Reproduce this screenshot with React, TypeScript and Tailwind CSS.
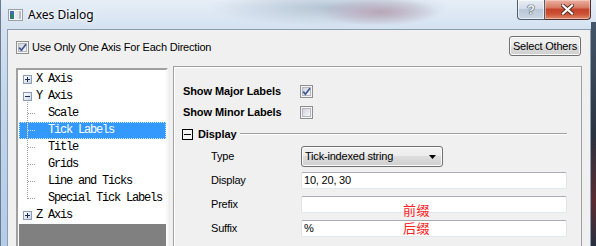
import React from "react";

const sans = { fontFamily: '"Liberation Sans", Arial, sans-serif' };
const mono = { fontFamily: '"Liberation Mono", "Courier New", monospace' };

function Win7Check({ checked }: { checked?: boolean }) {
  return (
    <span className="relative inline-flex w-[13px] h-[13px] shrink-0 items-center justify-center border border-[#8e8f8f] bg-[#f4f4f4]">
      <span className="w-[9px] h-[9px] border border-[#b3b7bd] bg-[linear-gradient(135deg,#cfd3d9,#f7f7f7)]" />
      {checked && (
        <svg className="absolute left-0 top-0" width="11" height="11" viewBox="0 0 11 11">
          <path d="M2.2 5.6 L4.4 8.2 L9 2.2" stroke="#3d5596" strokeWidth="1.7" fill="none" />
        </svg>
      )}
    </span>
  );
}

function Expander({ minus }: { minus?: boolean }) {
  return (
    <span className="relative block w-[9px] h-[9px] shrink-0 border border-[#8a9db5] bg-[linear-gradient(135deg,#ffffff,#c9d3df)]">
      <span className="absolute left-[1px] top-[3px] w-[5px] h-[1px] bg-[#1b2f5e]" />
      {!minus && <span className="absolute left-[3px] top-[1px] w-[1px] h-[5px] bg-[#1b2f5e]" />}
    </span>
  );
}

type Row = { label: string; level: 0 | 1; box?: "plus" | "minus"; sel?: boolean };
const rows: Row[] = [
  { label: "X Axis", level: 0, box: "plus" },
  { label: "Y Axis", level: 0, box: "minus" },
  { label: "Scale", level: 1 },
  { label: "Tick Labels", level: 1, sel: true },
  { label: "Title", level: 1 },
  { label: "Grids", level: 1 },
  { label: "Line and Ticks", level: 1 },
  { label: "Special Tick Labels", level: 1 },
  { label: "Z Axis", level: 0, box: "plus" },
];

function Tree() {
  return (
    <div className="w-[152px] h-[200px] mt-[2px] shrink-0 border-2 border-t-[#a0a0a0] border-l-[#a0a0a0] border-r-[#f8f8f8] border-b-[#f8f8f8] shadow-[inset_1px_1px_0_#696969]">
      <div className="relative h-full bg-white pl-[1px] pt-[1px] flex flex-col">
        {rows.map((r) => (
          <div
            key={r.label}
            className={
              "h-[17px] flex items-center shrink-0 text-[12px] tracking-[-1.2px] leading-[17px] " +
              (r.sel
                ? "bg-[#3399ff] text-white outline outline-1 outline-dotted outline-offset-[-1px] outline-[#cfe6ff]"
                : "text-black")
            }
            style={mono}
          >
            {r.level === 0 ? (
              <>
                <span className="ml-[4px]">
                  <Expander minus={r.box === "minus"} />
                </span>
                <span className="ml-[4px] whitespace-pre">{r.label}</span>
              </>
            ) : (
              <span className="ml-[29px] whitespace-pre">{r.label}</span>
            )}
          </div>
        ))}
        <div className="flex-1 bg-[#808080]" />
        <svg className="absolute left-0 top-[1px]" width="40" height="153" viewBox="0 0 40 153" shapeRendering="crispEdges">
          <line x1="9.5" y1="31" x2="9.5" y2="128" stroke="#a0a0a0" strokeDasharray="1 1" />
          {[42, 76, 93, 110, 127].map((y) => (
            <line key={y} x1="10" y1={y + 0.5} x2="17" y2={y + 0.5} stroke="#a0a0a0" strokeDasharray="1 1" />
          ))}
          <line x1="9.5" y1="52" x2="9.5" y2="68" stroke="#d6eaff" strokeDasharray="1 1" />
          <line x1="10" y1="59.5" x2="17" y2="59.5" stroke="#d6eaff" strokeDasharray="1 1" />
        </svg>
      </div>
    </div>
  );
}

function TextInput({ value, children }: { value?: string; children?: React.ReactNode }) {
  return (
    <div className="relative w-[266px] h-[17px] border border-[#e2e3ea] border-t-[#abadb3] border-b-[#e3e9ef] rounded-[2px] bg-white pl-[2px] text-[11px] tracking-[-0.2px] leading-[15px] text-black">
      {value}
      {children}
    </div>
  );
}

function FieldRow({ label, children, mt }: { label: string; children: React.ReactNode; mt: string }) {
  return (
    <div className={"flex items-center pl-[37px] " + mt}>
      <span className="w-[90px] text-[11px] tracking-[-0.2px] text-black">{label}</span>
      {children}
    </div>
  );
}

export default function App() {
  return (
    <div
      className="relative w-[596px] h-[246px] overflow-hidden bg-[radial-gradient(ellipse_60px_14px_at_380px_12px,#b9a6b8,transparent),radial-gradient(ellipse_120px_18px_at_330px_8px,#b4c3d3,transparent),linear-gradient(180deg,#e6eef7_0%,#d3e1f0_12%,#c2d6ec_40%,#b3cce8_100%)]"
      style={sans}
    >
      {/* right dark edge */}
      <div className="absolute right-0 top-[22px] w-[5px] h-[224px] bg-[linear-gradient(180deg,#45566a,#2a3340_50%,#5a2b30_80%,#283040)]" />
      <div className="absolute left-0 top-0 w-[1px] h-[246px] bg-[#6b7c8e]" />

      {/* Title bar */}
      <div className="h-[29px] flex items-start">
        <svg className="ml-[8px] mt-[9px]" width="15" height="12" viewBox="0 0 15 12">
          <rect x="0.5" y="0.5" width="14" height="11" fill="#f4f4f4" stroke="#9aa0a6" />
          <rect x="2" y="2" width="4" height="8" fill="#2f7a7a" />
          <rect x="2" y="2" width="4" height="3" fill="#3a6fb0" />
          <rect x="7" y="2" width="6" height="8" fill="#e6e9ec" />
          <rect x="11" y="2" width="2" height="8" fill="#b8bec4" />
        </svg>
        <span
          className="ml-[5px] mt-[7px] text-[12px] leading-[16px] text-black [text-shadow:0_0_6px_#ffffff,0_0_3px_#ffffff]"
          style={{ fontFamily: '"Noto Sans", "Open Sans", sans-serif' }}
        >
          Axes Dialog
        </span>
        <div className="flex-1" />
        <div className="flex mr-[5px]">
          <div className="w-[28px] h-[20px] flex items-center justify-center rounded-bl-[4px] border border-t-0 border-[#4f5d6c] bg-[linear-gradient(180deg,#e7edf4_0%,#d3dde8_45%,#b9c8d8_50%,#c9d6e4_100%)] shadow-[inset_0_0_0_1px_rgba(255,255,255,0.6)]">
            <span className="text-[13px] font-bold leading-[14px] text-[#f4f6f8] [text-shadow:0_0_1px_#3a4654,0_0_1px_#3a4654,0_0_1px_#3a4654]">?</span>
          </div>
          <div className="w-[46px] h-[20px] flex items-center justify-center rounded-br-[4px] border border-t-0 border-l-0 border-[#4f3030] bg-[linear-gradient(180deg,#eab2a3_0%,#d77b63_40%,#c4432b_50%,#cc5236_75%,#e08d70_100%)] shadow-[inset_0_0_0_1px_rgba(255,220,210,0.5)]">
            <svg width="13" height="11" viewBox="0 0 13 11">
              <path d="M2 1.5 L11 9.5 M11 1.5 L2 9.5" stroke="#5a2a22" strokeWidth="4" strokeLinecap="square" />
              <path d="M2 1.5 L11 9.5 M11 1.5 L2 9.5" stroke="#ffffff" strokeWidth="2.2" strokeLinecap="square" />
            </svg>
          </div>
        </div>
      </div>

      {/* Client area */}
      <div className="ml-[7px] w-[584px] h-[230px] border border-[#8d9db0] bg-[#f0f0f0] pl-[8px] pr-[8px] pt-[6px]">
        <div className="h-[20px] flex items-center justify-between">
          <div className="flex items-center mt-[3px]">
            <Win7Check checked />
            <span className="ml-[3px] text-[11px] tracking-[-0.2px] text-black">Use Only One Axis For Each Direction</span>
          </div>
          <div className="mr-[1px] w-[72px] h-[20px] flex items-center justify-center rounded-[3px] border border-[#707070] bg-[linear-gradient(180deg,#f2f2f2_0%,#ebebeb_50%,#dddddd_50%,#cfcfcf_100%)] shadow-[inset_0_0_0_1px_#fcfcfc] text-[11px] tracking-[-0.2px] text-black">
            Select Others
          </div>
        </div>

        <div className="mt-[10px] flex items-start gap-[5px]">
          <Tree />
          <div className="flex-1 h-[200px] border border-[#a0a0a0] shadow-[inset_1px_1px_0_#ffffff] pt-[14px]">
            <div className="h-[21px] flex items-center pl-[9px]">
              <span className="w-[117px] text-[11px] font-bold tracking-[-0.1px] text-black">Show Major Labels</span>
              <Win7Check checked />
            </div>
            <div className="h-[21px] flex items-center pl-[9px]">
              <span className="w-[117px] text-[11px] font-bold tracking-[-0.1px] text-black">Show Minor Labels</span>
              <Win7Check />
            </div>
            <div className="h-[22px] flex items-center pl-[8px] pr-[14px]">
              <span className="relative w-[11px] h-[11px] border border-black bg-[#f4f4f4] shrink-0">
                <span className="absolute left-[1px] top-[4px] w-[7px] h-[1px] bg-black" />
              </span>
              <span className="ml-[5px] text-[11px] font-bold tracking-[-0.1px] text-black">Display</span>
              <span className="ml-[4px] flex-1 h-[2px] border-t border-[#a0a0a0] border-b border-b-white mt-[-1px]" />
            </div>
            <FieldRow label="Type" mt="mt-[1px]">
              <div className="w-[142px] h-[21px] flex items-center justify-between pl-[3px] pr-[6px] rounded-[3px] border border-[#707070] bg-[linear-gradient(180deg,#f2f2f2_0%,#ebebeb_50%,#dddddd_50%,#cfcfcf_100%)] shadow-[inset_0_0_0_1px_#fcfcfc] text-[11px] tracking-[-0.2px] text-black">
                <span>Tick-indexed string</span>
                <svg width="7" height="4" viewBox="0 0 7 4">
                  <path d="M0 0 H7 L3.5 4 Z" fill="#000" />
                </svg>
              </div>
            </FieldRow>
            <FieldRow label="Display" mt="mt-[5px]">
              <TextInput value="10, 20, 30" />
            </FieldRow>
            <FieldRow label="Prefix" mt="mt-[7px]">
              <TextInput>
                <span
                  className="absolute left-[101px] top-[5px] text-[13px] leading-[15px] tracking-[0.5px] text-[#ff2020]"
                  style={{ fontFamily: '"Noto Sans CJK SC", sans-serif' }}
                >
                  前缀
                </span>
              </TextInput>
            </FieldRow>
            <FieldRow label="Suffix" mt="mt-[7px]">
              <TextInput value="%">
                <span
                  className="absolute left-[101px] top-[-1px] text-[13px] leading-[15px] tracking-[0.5px] text-[#ff2020]"
                  style={{ fontFamily: '"Noto Sans CJK SC", sans-serif' }}
                >
                  后缀
                </span>
              </TextInput>
            </FieldRow>
          </div>
        </div>
      </div>
    </div>
  );
}
